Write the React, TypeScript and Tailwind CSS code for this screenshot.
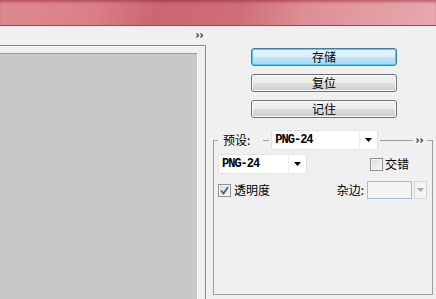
import { ChevronDown } from 'lucide-react';

const cjk = { fontFamily: '"Noto Sans CJK SC", "Noto Sans", sans-serif' };
const mono = { fontFamily: '"Liberation Mono", "DejaVu Sans Mono", monospace' };

function Chevrons() {
  return (
    <svg width="8" height="5" viewBox="0 0 8 5" className="block">
      <path d="M0.5 0.5 L2.5 2.5 L0.5 4.5 M4.5 0.5 L6.5 2.5 L4.5 4.5" stroke="#444" strokeWidth="1.3" fill="none" />
    </svg>
  );
}

function Arrow({ color = '#000' }: { color?: string }) {
  return (
    <svg width="7" height="4" viewBox="0 0 7 4" className="block">
      <path d="M0 0 H7 L3.5 4 Z" fill={color} />
    </svg>
  );
}

function WinButton({ label, focused = false }: { label: string; focused?: boolean }) {
  return (
    <button
      style={cjk}
      className={`h-[18px] w-[146px] rounded-[3px] border text-[12px] leading-none text-black ${
        focused
          ? 'border-[#3c7fb1] bg-[linear-gradient(#e9f6fd_0%,#d9f0fc_50%,#bee6fd_50%,#a7d9f5_100%)] shadow-[inset_0_0_0_1px_#58c8f2]'
          : 'border-[#707070] bg-[linear-gradient(#f2f2f2_0%,#ebebeb_50%,#dddddd_50%,#cfcfcf_100%)] shadow-[inset_0_0_0_1px_#fcfcfc]'
      }`}
    >
      {label}
    </button>
  );
}

function Select({ value, width }: { value: string; width: string }) {
  return (
    <div className={`flex h-[20px] ${width} items-stretch rounded-[2px] border border-[#e2e2e2] bg-white`}>
      <div style={mono} className="flex flex-1 items-center border-r border-[#f0f0f0] pl-[3px] text-[12px] font-semibold tracking-[-1px] text-black">
        {value}
      </div>
      <div className="flex w-[17px] items-center justify-center">
        <Arrow />
      </div>
    </div>
  );
}

function CheckBox({ checked = false }: { checked?: boolean }) {
  return (
    <div className="flex h-[13px] w-[13px] items-center justify-center border border-[#8f8f8f] bg-[linear-gradient(135deg,#dcdcdc,#f6f6f6)] shadow-[inset_0_0_0_1px_#f4f4f4]">
      {checked && (
        <svg width="9" height="9" viewBox="0 0 9 9">
          <path d="M1 4.5 L3.5 7.5 L8 1" stroke="#4a5f97" strokeWidth="1.8" fill="none" />
        </svg>
      )}
    </div>
  );
}

export default function App() {
  return (
    <div className="flex h-[299px] w-[436px] flex-col overflow-hidden bg-[#f0f0f0]">
      <div className="h-[26px] shrink-0 border-b border-[#9c4a54] bg-[linear-gradient(100deg,#dd8991_0%,#da7f88_22%,#cb6571_36%,#cf6e79_55%,#dd8f96_70%,#e7a9ae_100%)] shadow-[inset_0_3px_3px_-1px_rgba(140,20,40,0.45)]" />

      <div className="flex flex-1">
        {/* preview side */}
        <div className="flex w-[206px] shrink-0 flex-col">
          <div className="flex h-[19px] items-start justify-end pr-[2px] pt-[7px]">
            <Chevrons />
          </div>
          <div className="flex flex-1 flex-col border-r border-t border-[#8a8a8a] pr-[7px] pt-[7px] shadow-[inset_0_1px_0_#fff]">
            <div className="flex-1 border-r border-t border-r-white border-t-[#9a9a9a] bg-[#c8c8c8]" />
          </div>
        </div>

        {/* settings side */}
        <div className="flex flex-1 flex-col pl-[7px] pr-[3px]">
          <div className="flex flex-col gap-[8px] pl-[38px] pt-[22px]">
            <WinButton label="存储" focused />
            <WinButton label="复位" />
            <WinButton label="记住" />
          </div>

          <div className="mt-[12px] flex h-[20px] items-center">
            <div className="h-[10px] w-[5px] self-end border-l border-t border-[#9d9d9d]" />
            <span style={cjk} className="ml-[5px] text-[12px] leading-none text-black">预设:</span>
            <div className="ml-[13px] h-px w-[6px] bg-[#9d9d9d]" />
            <div className="ml-[2px]">
              <Select value="PNG-24" width="w-[107px]" />
            </div>
            <div className="ml-[2px] h-px flex-1 bg-[#9d9d9d]" />
            <div className="mx-[3px]">
              <Chevrons />
            </div>
            <div className="h-[10px] w-[6px] self-end border-r border-t border-[#9d9d9d]" />
          </div>

          <div className="mb-[4px] flex flex-1 flex-col gap-[6px] border-b border-l border-r border-[#9d9d9d] px-[4px] pt-[4px] pr-[5px]">
            <div className="flex items-center">
              <Select value="PNG-24" width="w-[89px]" />
              <div className="ml-auto mr-[18px] flex items-center gap-[2px]">
                <CheckBox />
                <span style={cjk} className="text-[12px] leading-none text-black">交错</span>
              </div>
            </div>
            <div className="flex h-[20px] items-center">
              <CheckBox checked />
              <span style={cjk} className="ml-[3px] text-[12px] leading-none text-black">透明度</span>
              <span style={cjk} className="ml-auto text-[12px] leading-none text-black">杂边:</span>
              <div className="ml-[3px] h-[18px] w-[45px] border border-[#a7bcd9] bg-[#f4f4f4]" />
              <div className="ml-[2px] flex h-[18px] w-[13px] items-center justify-center border border-[#d5d5d5] bg-[#f4f4f4]">
                <Arrow color="#a6a6a6" />
              </div>
            </div>
          </div>
        </div>
      </div>
    </div>
  );
}
